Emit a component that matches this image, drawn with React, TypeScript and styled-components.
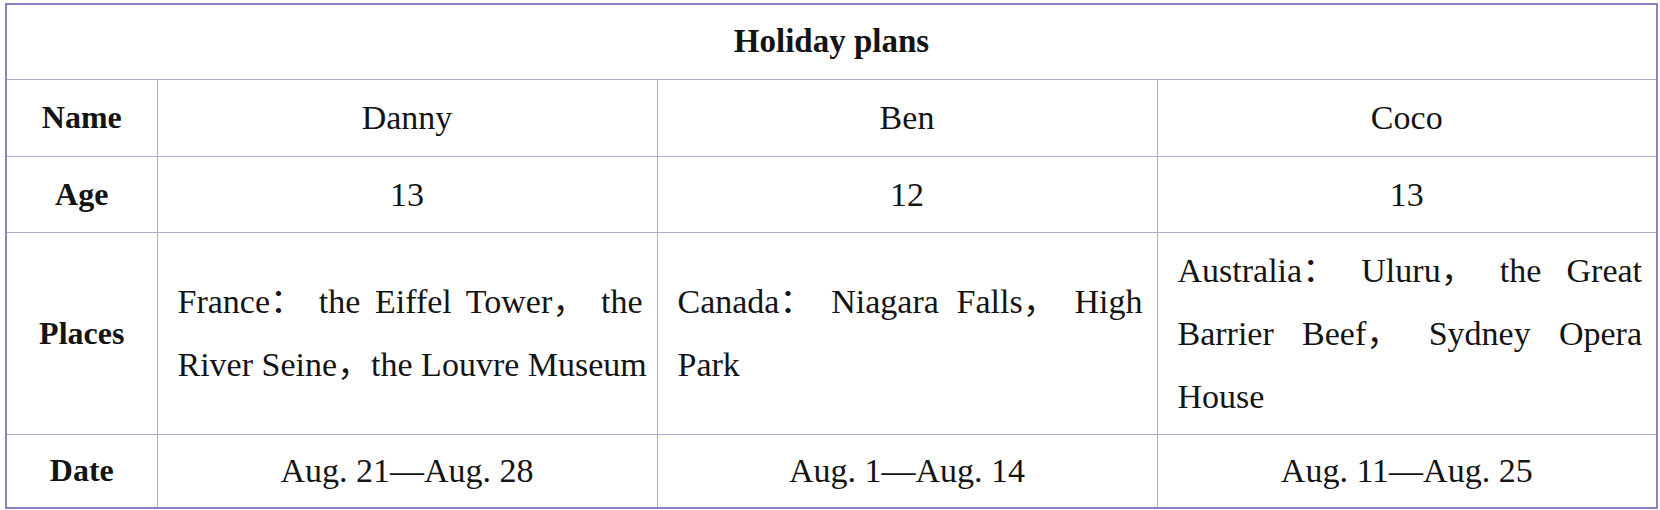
import React from 'react';
import styled, { createGlobalStyle } from 'styled-components';

interface Plan {
  name: string;
  age: number;
  places: string[];
  date: string;
}

const plans: Plan[] = [
  {
    name: 'Danny',
    age: 13,
    places: ['France： the Eiffel Tower， the', 'River Seine，the Louvre Museum'],
    date: 'Aug. 21—Aug. 28',
  },
  {
    name: 'Ben',
    age: 12,
    places: ['Canada： Niagara Falls， High', 'Park'],
    date: 'Aug. 1—Aug. 14',
  },
  {
    name: 'Coco',
    age: 13,
    places: ['Australia： Uluru， the Great', 'Barrier Beef， Sydney Opera', 'House'],
    date: 'Aug. 11—Aug. 25',
  },
];

// full-width marks go in their own box so justify doesn't pad round them
const renderLine = (line: string) =>
  line.split(/([：，])/).map((part, i) =>
    part === '：' || part === '，' ? <Punct key={i}>{part}</Punct> : part
  );

const App = () => {
  return (
    <>
      <GlobalStyle />
      <Page>
        <Table>
          <colgroup>
            <col style={{ width: 151 }} />
            <col style={{ width: 500 }} />
            <col style={{ width: 500 }} />
            <col style={{ width: 500 }} />
          </colgroup>
          <tbody>
            <Row $h={75}>
              <Caption colSpan={4}>Holiday plans</Caption>
            </Row>
            <Row $h={77}>
              <Label>Name</Label>
              {plans.map((p) => (
                <Value key={p.name}>{p.name}</Value>
              ))}
            </Row>
            <Row $h={76}>
              <Label>Age</Label>
              {plans.map((p) => (
                <Value key={p.name}>{p.age}</Value>
              ))}
            </Row>
            <Row $h={202}>
              <Label>Places</Label>
              {plans.map((p) => (
                <Value key={p.name} $left>
                  {p.places.map((line, i) => (
                    <Line key={i} $justify={i < p.places.length - 1 || p.name === 'Danny'}>
                      {renderLine(line)}
                    </Line>
                  ))}
                </Value>
              ))}
            </Row>
            <Row $h={74}>
              <Label>Date</Label>
              {plans.map((p) => (
                <Value key={p.name}>{p.date}</Value>
              ))}
            </Row>
          </tbody>
        </Table>
      </Page>
    </>
  );
};

const GlobalStyle = createGlobalStyle`
  html, body {
    margin: 0;
    padding: 0;
    background: #fff;
  }
`;

const Page = styled.div`
  width: 1660px;
  height: 510px;
  padding: 3px 0 0 5px;
  box-sizing: border-box;
  background: #fff;
`;

const Table = styled.table`
  width: 1652px;
  table-layout: fixed;
  border-collapse: collapse;
  border: 2px solid #9080c0;
  font-family: 'Liberation Serif', 'Noto Sans CJK SC', serif;
  color: #141414;
`;

const Row = styled.tr<{ $h: number }>`
  height: ${(p) => p.$h}px;
`;

const Caption = styled.th`
  font-size: 33px;
  font-weight: 700;
  text-align: center;
  vertical-align: middle;
  padding: 0;
  border-bottom: 1px solid #b5a9d2;
`;

const Label = styled.th`
  font-size: 32px;
  font-weight: 700;
  text-align: center;
  vertical-align: middle;
  padding: 0;
  border: 1px solid #b5a9d2;
  border-left: 2px solid #9080c0;
`;

const Value = styled.td<{ $left?: boolean }>`
  font-size: 34px;
  font-weight: 400;
  text-align: ${(p) => (p.$left ? 'left' : 'center')};
  vertical-align: middle;
  padding: ${(p) => (p.$left ? '0 14px 0 20px' : '0')};
  line-height: 63px;
  border: 1px solid #b5a9d2;
  &:last-child {
    border-right: 2px solid #9080c0;
  }
`;

const Line = styled.span<{ $justify: boolean }>`
  display: block;
  text-align: ${(p) => (p.$justify ? 'justify' : 'left')};
  text-align-last: ${(p) => (p.$justify ? 'justify' : 'left')};
  text-justify: inter-word;
  white-space: nowrap;
`;

const Punct = styled.span`
  display: inline-block;
  line-height: 1;
  font-family: 'Noto Sans CJK SC', sans-serif;
`;

export default App;
